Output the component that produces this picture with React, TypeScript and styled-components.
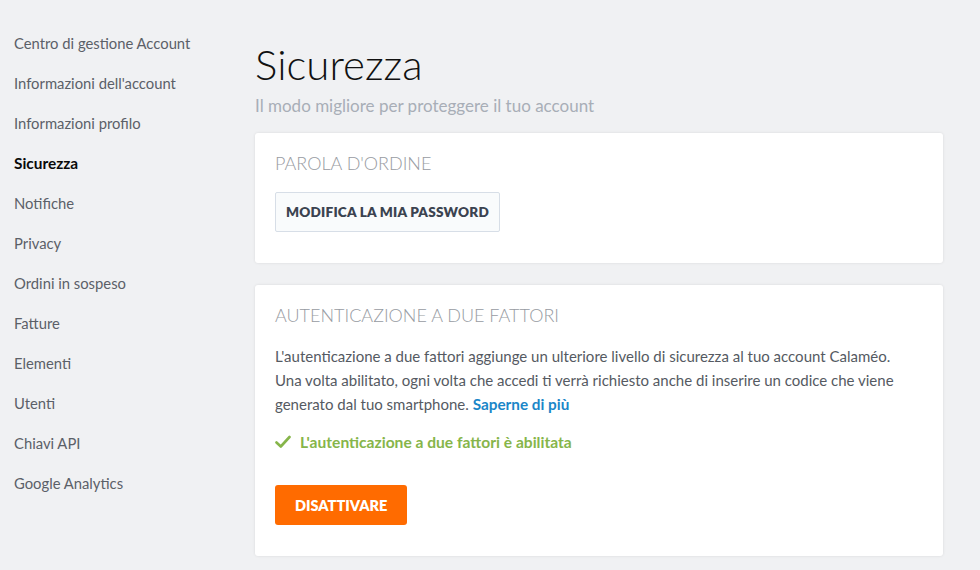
import React from "react";
import styled, { createGlobalStyle } from "styled-components";

const Global = createGlobalStyle`
  html, body { margin: 0; padding: 0; background: #f0f1f3; }
  body { font-family: Lato, "Open Sans", sans-serif; -webkit-font-smoothing: antialiased; }
  * { box-sizing: border-box; }
`;

const Page = styled.div`
  display: flex;
  width: 980px;
  height: 570px;
  overflow: hidden;
  background: #f0f1f3;
`;

const Sidebar = styled.nav`
  width: 255px;
  flex-shrink: 0;
  padding: 33px 0 0 14px;
  display: flex;
  flex-direction: column;
`;

const NavItem = styled.a<{ $active?: boolean }>`
  display: block;
  height: 40px;
  line-height: 20px;
  font-size: ${(p) => (p.$active ? "15.4px" : "14.8px")};
  color: ${(p) => (p.$active ? "#0a0a0a" : "#5b6068")};
  font-weight: ${(p) => (p.$active ? 700 : 400)};
  text-decoration: none;
  cursor: pointer;
`;

const Main = styled.main`
  flex: 1;
  padding: 40px 37px 0 0;
  display: flex;
  flex-direction: column;
`;

const Title = styled.h1`
  margin: 0;
  font-size: 42px;
  font-weight: 300;
  color: #111;
  line-height: 48px;
`;

const Subtitle = styled.p`
  margin: 7px 0 16px 0;
  font-size: 17px;
  color: #a8aeb7;
  line-height: 22px;
`;

const Card = styled.section`
  background: #fff;
  border-radius: 3px;
  box-shadow: 0 0 3px rgba(0, 0, 0, 0.1);
  padding: 19px 20px 31px;
  margin-bottom: 22px;
`;

const CardTitle = styled.h2`
  margin: 0 0 18px 0;
  font-size: 18px;
  font-weight: 300;
  color: #979ba2;
  line-height: 22px;
  text-transform: uppercase;
`;

const SecondaryButton = styled.button`
  height: 40px;
  padding: 0 10px;
  border: 1px solid #d7dee7;
  border-radius: 2px;
  background: #f9fbfc;
  color: #3b4350;
  font-family: inherit;
  font-weight: 800;
  font-size: 13.6px;
  letter-spacing: 0.2px;
  cursor: pointer;
`;

const Paragraph = styled.p`
  margin: 0;
  font-size: 15px;
  line-height: 24px;
  color: #555a62;
`;

const Link = styled.a`
  color: #1a86c8;
  font-weight: 700;
  font-size: 15.3px;
  text-decoration: none;
`;

const Status = styled.div`
  display: flex;
  align-items: center;
  gap: 9px;
  margin: 16px 0 33px 0;
  color: #86b54a;
  font-weight: 700;
  font-size: 15.6px;
  line-height: 20px;
`;

const PrimaryButton = styled.button`
  height: 40px;
  padding: 0 20px;
  border: none;
  border-radius: 3px;
  background: #ff6b00;
  color: #fff;
  font-family: inherit;
  font-weight: 800;
  font-size: 14.5px;
  cursor: pointer;
`;

const nav = [
  "Centro di gestione Account",
  "Informazioni dell'account",
  "Informazioni profilo",
  "Sicurezza",
  "Notifiche",
  "Privacy",
  "Ordini in sospeso",
  "Fatture",
  "Elementi",
  "Utenti",
  "Chiavi API",
  "Google Analytics",
];

export default function App() {
  return (
    <>
      <Global />
      <Page>
        <Sidebar>
          {nav.map((n) => (
            <NavItem key={n} $active={n === "Sicurezza"}>
              {n}
            </NavItem>
          ))}
        </Sidebar>
        <Main>
          <Title>Sicurezza</Title>
          <Subtitle>Il modo migliore per proteggere il tuo account</Subtitle>
          <Card>
            <CardTitle>Parola d'ordine</CardTitle>
            <SecondaryButton>MODIFICA LA MIA PASSWORD</SecondaryButton>
          </Card>
          <Card>
            <CardTitle>Autenticazione a due fattori</CardTitle>
            <Paragraph>
              L'autenticazione a due fattori aggiunge un ulteriore livello di sicurezza al tuo account Calaméo.
              <br />
              Una volta abilitato, ogni volta che accedi ti verrà richiesto anche di inserire un codice che viene
              <br />
              generato dal tuo smartphone. <Link>Saperne di più</Link>
            </Paragraph>
            <Status>
              <svg width="16" height="14" viewBox="0 0 16 14">
                <path d="M1.5 7.5 L5.8 11.5 L14.5 2" fill="none" stroke="#86b54a" strokeWidth="2.6" strokeLinecap="round" strokeLinejoin="round" />
              </svg>
              L'autenticazione a due fattori è abilitata
            </Status>
            <PrimaryButton>DISATTIVARE</PrimaryButton>
          </Card>
        </Main>
      </Page>
    </>
  );
}
